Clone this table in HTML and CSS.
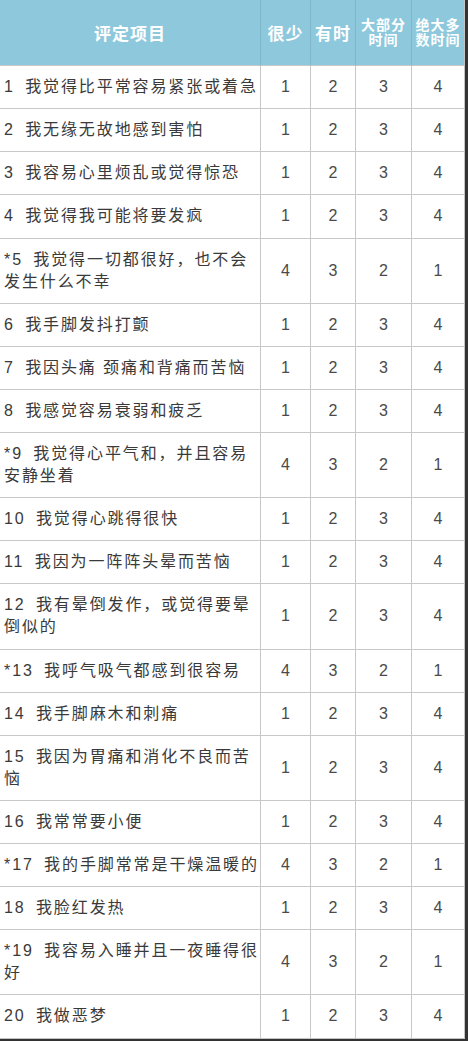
FILE: index.html
```html
<!DOCTYPE html>
<html lang="zh-CN">
<head>
<meta charset="utf-8">
<title>评定项目</title>
<link rel="stylesheet" href="styles.css">
</head>
<body>
<div class="frame">
<table class="scale">
<colgroup>
<col class="c-item"><col class="c-a"><col class="c-b"><col class="c-c"><col class="c-d">
</colgroup>
<thead>
<tr>
<th class="h-item">评定项目</th>
<th>很少</th>
<th>有时</th>
<th class="h-small">大部分<br>时间</th>
<th class="h-small">绝大多<br>数时间</th>
</tr>
</thead>
<tbody>
<tr><td class="item"><span class="no">1</span> 我觉得比平常容易紧张或着急</td><td>1</td><td>2</td><td>3</td><td>4</td></tr>
<tr><td class="item"><span class="no">2</span> 我无缘无故地感到害怕</td><td>1</td><td>2</td><td>3</td><td>4</td></tr>
<tr><td class="item"><span class="no">3</span> 我容易心里烦乱或觉得惊恐</td><td>1</td><td>2</td><td>3</td><td>4</td></tr>
<tr><td class="item"><span class="no">4</span> 我觉得我可能将要发疯</td><td>1</td><td>2</td><td>3</td><td>4</td></tr>
<tr><td class="item"><span class="no">*5</span> 我觉得一切都很好，也不会<br>发生什么不幸</td><td>4</td><td>3</td><td>2</td><td>1</td></tr>
<tr><td class="item"><span class="no">6</span> 我手脚发抖打颤</td><td>1</td><td>2</td><td>3</td><td>4</td></tr>
<tr><td class="item"><span class="no">7</span> 我因头痛 颈痛和背痛而苦恼</td><td>1</td><td>2</td><td>3</td><td>4</td></tr>
<tr><td class="item"><span class="no">8</span> 我感觉容易衰弱和疲乏</td><td>1</td><td>2</td><td>3</td><td>4</td></tr>
<tr><td class="item"><span class="no">*9</span> 我觉得心平气和，并且容易<br>安静坐着</td><td>4</td><td>3</td><td>2</td><td>1</td></tr>
<tr><td class="item"><span class="no">10</span> 我觉得心跳得很快</td><td>1</td><td>2</td><td>3</td><td>4</td></tr>
<tr><td class="item"><span class="no">11</span> 我因为一阵阵头晕而苦恼</td><td>1</td><td>2</td><td>3</td><td>4</td></tr>
<tr><td class="item"><span class="no">12</span> 我有晕倒发作，或觉得要晕<br>倒似的</td><td>1</td><td>2</td><td>3</td><td>4</td></tr>
<tr><td class="item"><span class="no">*13</span> 我呼气吸气都感到很容易</td><td>4</td><td>3</td><td>2</td><td>1</td></tr>
<tr><td class="item"><span class="no">14</span> 我手脚麻木和刺痛</td><td>1</td><td>2</td><td>3</td><td>4</td></tr>
<tr><td class="item"><span class="no">15</span> 我因为胃痛和消化不良而苦<br>恼</td><td>1</td><td>2</td><td>3</td><td>4</td></tr>
<tr><td class="item"><span class="no">16</span> 我常常要小便</td><td>1</td><td>2</td><td>3</td><td>4</td></tr>
<tr><td class="item"><span class="no">*17</span> 我的手脚常常是干燥温暖的</td><td>4</td><td>3</td><td>2</td><td>1</td></tr>
<tr><td class="item"><span class="no">18</span> 我脸红发热</td><td>1</td><td>2</td><td>3</td><td>4</td></tr>
<tr><td class="item"><span class="no">*19</span> 我容易入睡并且一夜睡得很<br>好</td><td>4</td><td>3</td><td>2</td><td>1</td></tr>
<tr><td class="item"><span class="no">20</span> 我做恶梦</td><td>1</td><td>2</td><td>3</td><td>4</td></tr>
</tbody>
</table>
</div>
</body>
</html>
```
FILE: styles.css
```css
html, body {
  margin: 0;
  padding: 0;
  background: #ffffff;
}

.frame {
  width: 465px;
  border-right: 3px solid #333333;
  border-bottom: 2px solid #333333;
}

.scale {
  width: 465px;
  table-layout: fixed;
  border-collapse: separate;
  border-spacing: 0;
  font-family: "Liberation Sans", "Noto Sans CJK SC", sans-serif;
  color: #3a3a3a;
}

.c-item { width: 261px; }
.c-a { width: 50px; }
.c-b { width: 45px; }
.c-c { width: 56px; }
.c-d { width: 53px; }

.scale th {
  background: #8dc8dc;
  color: #ffffff;
  font-weight: 700;
  font-size: 17px;
  letter-spacing: 1px;
  height: 65px;
  padding: 0;
  text-align: center;
  vertical-align: middle;
  border-right: 1px solid #7fb6ca;
  border-bottom: 1px solid #c8c8c8;
}

.scale th.h-small {
  font-size: 14px;
  line-height: 15px;
  letter-spacing: 1px;
}

.scale th:last-child,
.scale td:last-child {
  border-right: 1px solid #c4c4c4;
}

.scale td {
  font-size: 16px;
  line-height: 22px;
  padding: 10.075px 0;
  text-align: center;
  vertical-align: middle;
  color: #4a4a4a;
  border-right: 1px solid #c8c8c8;
  border-bottom: 1px solid #c8c8c8;
}

.scale td.item {
  text-align: left;
  padding-left: 4px;
  padding-right: 2px;
  letter-spacing: 1.9px;
  color: #3a3a3a;
  white-space: nowrap;
}

.scale td.item .no {
  margin-right: 4px;
}

.scale tbody tr:last-child td {
  border-bottom: 1px solid #c4c4c4;
}
```
